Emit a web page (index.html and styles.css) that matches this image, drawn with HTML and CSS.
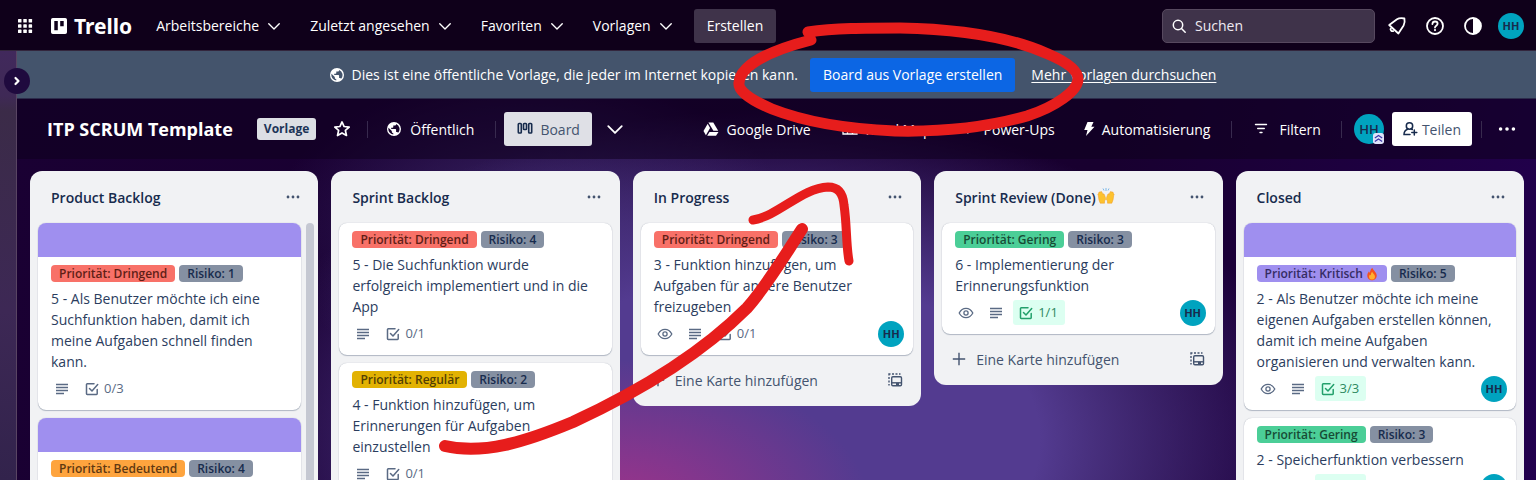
FILE: index.html
```html
<!DOCTYPE html>
<html lang="de">
<head>
<meta charset="utf-8">
<meta name="viewport" content="width=device-width, initial-scale=1">
<title>ITP SCRUM Template | Trello</title>
<link rel="stylesheet" href="styles.css">
</head>
<body>
<svg class="sprite" aria-hidden="true">
  <symbol id="chevron" viewBox="0 0 16 16"><path d="M2 5.500 8 11.500l6-6" fill="none" stroke="currentColor" stroke-width="1.600" stroke-linecap="round" stroke-linejoin="round"/></symbol>
  <symbol id="globe" viewBox="0 0 16 16"><path fill="currentColor" fill-rule="evenodd" d="M8 1a7 7 0 1 0 0 14A7 7 0 0 0 8 1Zm-.7 12.600A5.600 5.600 0 0 1 2.500 6.800L5.800 10v.8c0 .8.7 1.400 1.500 1.400v1.400Zm4.800-1.800c-.2-.5-.7-.9-1.300-.9h-.7V8.800c0-.4-.3-.7-.7-.7H5.200V6.700h1.400c.4 0 .7-.3.7-.7V4.600h1.400c.8 0 1.400-.7 1.400-1.400v-.3a5.600 5.600 0 0 1 2 8.900Z"/></symbol>
  <symbol id="dots" viewBox="0 0 16 16"><g fill="currentColor"><circle cx="2.300" cy="8" r="1.600"/><circle cx="8" cy="8" r="1.600"/><circle cx="13.700" cy="8" r="1.600"/></g></symbol>
  <symbol id="lines" viewBox="0 0 16 16"><path d="M2 3.500h12M2 6.500h12M2 9.500h12M2 12.500h8" stroke="currentColor" stroke-width="1.400" fill="none"/></symbol>
  <symbol id="check" viewBox="0 0 16 16"><path d="M10 2.800H3.200a.7.700 0 0 0-.7.7v9.300c0 .4.3.7.7.7h9.300c.4 0 .7-.3.7-.7V8.500M5.500 7.500 8 10l5.700-6.500" stroke="currentColor" stroke-width="1.500" fill="none" stroke-linecap="round" stroke-linejoin="round"/></symbol>
  <symbol id="eye" viewBox="0 0 16 16"><g fill="none" stroke="currentColor" stroke-width="1.300"><path d="M1.200 8C2.800 4.900 5.200 3.300 8 3.300S13.200 4.900 14.800 8c-1.600 3.100-4 4.700-6.800 4.700S2.800 11.100 1.200 8Z"/><circle cx="8" cy="8" r="2.100"/></g></symbol>
  <symbol id="plus" viewBox="0 0 16 16"><path d="M8 1.800v12.400M1.800 8h12.400" stroke="currentColor" stroke-width="1.400"/></symbol>
  <symbol id="template" viewBox="0 0 16 16"><g fill="none" stroke="currentColor" stroke-width="1.400"><path d="M2 13.500V12M2 10.500V8.500M2 7V5M2 3.500V2h1.500M5 2h2M8.500 2h2M12 2h1.500"/><rect x="4.700" y="4.700" width="9.800" height="9" rx="1.200"/><path d="M4.700 10.800h9.800"/></g><path d="M9 11h3v2H9z" fill="currentColor"/></symbol>
  <symbol id="hands" viewBox="0 0 18 18"><g fill="#fdc22e" stroke="#ee9a25" stroke-width=".5"><path d="M8.400 10.500 7.300 7.400c-.4-1-1.400-.7-1.200.3L4.800 4.900c-.5-.9-1.500-.5-1.300.4L2.700 5c-.8-.1-1.100.4-.9 1.100l-.5.700c-.6.500-.5 1 0 1.700l.6 4.200 1.300 3.500h4.300v-2.300c1.200-.8 1.200-1.900.9-3.400Z"/><path d="m9.600 10.500 1.100-3.100c.4-1 1.400-.7 1.200.3l1.300-2.800c.5-.9 1.500-.5 1.300.4l.8-.3c.8-.1 1.100.4.900 1.100l.5.700c.6.500.5 1 0 1.700l-.6 4.200-1.300 3.500h-4.300v-2.300c-1.200-.8-1.200-1.900-.9-3.400Z"/></g><path d="M9 1v3M6 1.500l1 2M12 1.500l-1 2" stroke="#7db9e8" stroke-width="1" fill="none"/></symbol>
  <symbol id="flame" viewBox="0 0 16 16"><path fill="#f4511e" d="M8.500.8c.3 2.800 4.900 4.700 4.900 9 0 3.200-2.400 5.400-5.400 5.400s-5.400-2.200-5.400-5.400c0-2.200 1.200-3.600 1.900-4.900.3.900.6 1.400 1.200 1.700C5.900 4.200 6.500 2 8.500.8Z"/><path fill="#ffb02e" d="M8.200 5.500c.3 1.700 3.200 3 3.200 5.500 0 2-1.500 3.400-3.400 3.400S4.600 13 4.600 11c0-1.100.5-1.800 1-2.400.3.600.7.800 1.100.8 0-1.300.3-2.800 1.500-3.900Z"/></symbol>
</svg>

<header class="topbar">
  <button class="icon-btn apps" aria-label="Apps"><svg viewBox="0 0 16 16" class="i16"><g fill="currentColor"><rect x="1" y="1" width="3.500" height="3.500" rx=".6"/><rect x="6.300" y="1" width="3.500" height="3.500" rx=".6"/><rect x="11.600" y="1" width="3.500" height="3.500" rx=".6"/><rect x="1" y="6.300" width="3.500" height="3.500" rx=".6"/><rect x="6.300" y="6.300" width="3.500" height="3.500" rx=".6"/><rect x="11.600" y="6.300" width="3.500" height="3.500" rx=".6"/><rect x="1" y="11.600" width="3.500" height="3.500" rx=".6"/><rect x="6.300" y="11.600" width="3.500" height="3.500" rx=".6"/><rect x="11.600" y="11.600" width="3.500" height="3.500" rx=".6"/></g></svg></button>
  <a class="logo" href="#"><svg viewBox="0 0 16 16" class="i16"><path fill="currentColor" fill-rule="evenodd" d="M1.800 0h12.400A1.800 1.800 0 0 1 16 1.800v12.400a1.800 1.800 0 0 1-1.800 1.800H1.800A1.800 1.800 0 0 1 0 14.200V1.800A1.800 1.800 0 0 1 1.800 0Zm1.500 3v9.200h3.500V3H3.300Zm5.900 0v5.300h3.500V3H9.200Z"/></svg>Trello</a>
  <nav class="menu">
    <button>Arbeitsbereiche<svg class="i14"><use href="#chevron"/></svg></button>
    <button>Zuletzt angesehen<svg class="i14"><use href="#chevron"/></svg></button>
    <button>Favoriten<svg class="i14"><use href="#chevron"/></svg></button>
    <button>Vorlagen<svg class="i14"><use href="#chevron"/></svg></button>
    <button class="create">Erstellen</button>
  </nav>
  <div class="tools">
    <label class="search"><svg viewBox="0 0 16 16" class="i16"><g fill="none" stroke="currentColor" stroke-width="1.500" stroke-linecap="round"><circle cx="7" cy="7" r="4.700"/><path d="m10.500 10.500 3.700 3.700"/></g></svg><input type="text" placeholder="Suchen" aria-label="Suchen"></label>
    <button class="icon-btn" aria-label="Benachrichtigungen"><svg viewBox="0 0 20 20" class="i20"><path d="M2.200 9 10 3.300C12 2 14.800 2 17.400 2.500c.5 2.500.4 5-.8 7L11.400 17.500ZM3.800 12.200c-.9 1.700.7 3.600 3 2.700" fill="none" stroke="currentColor" stroke-width="1.800" stroke-linejoin="round"/></svg></button>
    <button class="icon-btn" aria-label="Hilfe"><svg viewBox="0 0 20 20" class="i20"><g fill="none" stroke="currentColor" stroke-width="1.800" stroke-linecap="round"><circle cx="10" cy="10" r="8"/><path d="M7.400 8c.1-1.600 1.200-2.500 2.600-2.500s2.600.9 2.600 2.200c0 1.900-2.600 2-2.600 3.800"/></g><circle cx="10" cy="14.100" r="1.100" fill="currentColor"/></svg></button>
    <button class="icon-btn" aria-label="Design"><svg viewBox="0 0 20 20" class="i20"><circle cx="10" cy="10" r="8" fill="none" stroke="currentColor" stroke-width="1.800"/><path d="M10 2a8 8 0 0 1 0 16Z" fill="currentColor"/></svg></button>
    <button class="avatar account" aria-label="Konto">HH</button>
  </div>
</header>

<div class="workspace">
  <aside class="sidebar"><button class="expand" aria-label="Seitenleiste einblenden"><svg viewBox="0 0 16 16" class="i16"><path d="m6.500 5 3 3-3 3" fill="none" stroke="currentColor" stroke-width="2.200" stroke-linecap="round" stroke-linejoin="round"/></svg></button></aside>
  <main class="board">
    <div class="banner">
      <p><svg class="i16"><use href="#globe"/></svg>Dies ist eine öffentliche Vorlage, die jeder im Internet kopieren kann.</p>
      <button class="primary">Board aus Vorlage erstellen</button>
      <a href="#">Mehr Vorlagen durchsuchen</a>
    </div>
    <div class="board-header">
      <h1>ITP SCRUM Template</h1>
      <span class="tag">Vorlage</span>
      <button class="star" aria-label="Markieren"><svg viewBox="0 0 16 16" class="i18"><path d="m8 1.700 1.900 4.100 4.500.5-3.400 3 1 4.500L8 11.500l-4 2.300 1-4.500-3.400-3 4.500-.5Z" fill="none" stroke="currentColor" stroke-width="1.500" stroke-linejoin="round"/></svg></button>
      <i class="divider"></i>
      <button class="bar-btn visibility"><svg class="i16"><use href="#globe"/></svg>Öffentlich</button>
      <i class="divider"></i>
      <button class="view"><svg viewBox="0 0 16 16" class="i16"><g fill="none" stroke="#172b4d" stroke-width="1.600"><rect x="1.300" y="2.500" width="3" height="9.500" rx=".8"/><rect x="6.500" y="2.500" width="3" height="6" rx=".8"/><rect x="11.700" y="2.500" width="3" height="9.500" rx=".8"/></g></svg>Board</button>
      <button class="more-views" aria-label="Ansichten"><svg class="i18"><use href="#chevron"/></svg></button>
      <div class="actions">
        <button class="bar-btn drive"><svg viewBox="0 0 16 16" class="i16"><g fill="currentColor"><path d="M5.400 1.500h4.900l4.900 8.300h-4.800Z"/><path d="M4.700 2.700 7.100 6.900 2.900 14.200.5 10Z"/><path d="M6.500 10.900h9L13 14.800H4.200Z"/></g></svg>Google Drive</button>
        <button class="bar-btn"><svg viewBox="0 0 16 16" class="i16"><path d="M1 3h14M1 3v10h14V3M5.500 3v10M10.500 3v10M1 8h14" fill="none" stroke="currentColor" stroke-width="1.300"/></svg>Road Map</button>
        <button class="bar-btn"><svg viewBox="0 0 16 16" class="i16"><path d="M6 9.500C5.500 5.500 7.500 2 12 1.800c.5 4.500-2 7.500-6 7.700ZM5 6 3 8.500M9.500 9l-2 3.500" fill="none" stroke="currentColor" stroke-width="1.500"/></svg>Power-Ups</button>
        <button class="bar-btn bolt"><svg viewBox="0 0 12 16" class="i-bolt"><path d="M4.500 1h6L8.300 5.800H11.500L3 15l1.500-6H1.200Z" fill="currentColor"/></svg>Automatisierung</button>
        <i class="divider"></i>
        <button class="bar-btn filter"><svg viewBox="0 0 16 16" class="i16"><path d="M2.500 3.500h11M4.700 7.500h6.600M7 11.500h2" fill="none" stroke="currentColor" stroke-width="1.400" stroke-linecap="round"/></svg>Filtern</button>
        <i class="divider"></i>
        <button class="avatar large" aria-label="Mitglied">HH<svg viewBox="0 0 12 12" class="admin"><rect width="12" height="12" rx="3" fill="#dfe3fa"/><path d="m2 5.500 4-2.700 4 2.700M2 9.200l4-2.700 4 2.700" fill="none" stroke="#3d36a8" stroke-width="1.300"/></svg></button>
        <button class="share"><svg viewBox="0 0 16 16" class="i16"><g fill="none" stroke="#172b4d" stroke-width="1.500" stroke-linecap="round"><circle cx="7.500" cy="5" r="3.200"/><path d="M8 13.500H2c0-3 1.500-4.500 3.500-5.300M12.300 9v5M9.800 11.500h5M9.500 8l.8.500"/></g></svg>Teilen</button>
        <i class="divider"></i>
        <button class="icon-btn" aria-label="Menü"><svg class="i18"><use href="#dots"/></svg></button>
      </div>
    </div>

    <div class="lists">
      <section class="list tall scrolls">
        <header><h2>Product Backlog</h2><button aria-label="Aktionen"><svg class="i14"><use href="#dots"/></svg></button></header>
        <div class="cards">
          <article class="card"><div class="cover"></div><div class="body">
            <div class="labels"><span class="red">Priorität: Dringend</span><span class="grey">Risiko: 1</span></div>
            <p>5 - Als Benutzer möchte ich eine Suchfunktion haben, damit ich meine Aufgaben schnell finden kann.</p>
            <div class="badges"><span><svg class="i16"><use href="#lines"/></svg></span><span><svg class="i16"><use href="#check"/></svg>0/3</span></div>
          </div></article>
          <article class="card"><div class="cover"></div><div class="body">
            <div class="labels"><span class="orange">Priorität: Bedeutend</span><span class="grey">Risiko: 4</span></div>
          </div></article>
        </div>
        <div class="scrollbar"></div>
      </section>

      <section class="list tall">
        <header><h2>Sprint Backlog</h2><button aria-label="Aktionen"><svg class="i14"><use href="#dots"/></svg></button></header>
        <div class="cards">
          <article class="card"><div class="body">
            <div class="labels"><span class="red">Priorität: Dringend</span><span class="grey">Risiko: 4</span></div>
            <p>5 - Die Suchfunktion wurde erfolgreich implementiert und in die App</p>
            <div class="badges"><span><svg class="i16"><use href="#lines"/></svg></span><span><svg class="i16"><use href="#check"/></svg>0/1</span></div>
          </div></article>
          <article class="card"><div class="body">
            <div class="labels"><span class="yellow">Priorität: Regulär</span><span class="grey">Risiko: 2</span></div>
            <p>4 - Funktion hinzufügen, um Erinnerungen für Aufgaben einzustellen</p>
            <div class="badges"><span><svg class="i16"><use href="#lines"/></svg></span><span><svg class="i16"><use href="#check"/></svg>0/1</span></div>
          </div></article>
        </div>
      </section>

      <section class="list">
        <header><h2>In Progress</h2><button aria-label="Aktionen"><svg class="i14"><use href="#dots"/></svg></button></header>
        <div class="cards">
          <article class="card"><div class="body">
            <div class="labels"><span class="red">Priorität: Dringend</span><span class="grey">Risiko: 3</span></div>
            <p>3 - Funktion hinzufügen, um Aufgaben für andere Benutzer freizugeben</p>
            <div class="badges"><span><svg class="i16"><use href="#eye"/></svg></span><span><svg class="i16"><use href="#lines"/></svg></span><span><svg class="i16"><use href="#check"/></svg>0/1</span><b class="avatar">HH</b></div>
          </div></article>
        </div>
        <footer><button class="add"><svg class="i16"><use href="#plus"/></svg>Eine Karte hinzufügen</button><button aria-label="Aus Vorlage erstellen"><svg class="i16"><use href="#template"/></svg></button></footer>
      </section>

      <section class="list">
        <header><h2>Sprint Review (Done)<svg class="i18"><use href="#hands"/></svg></h2><button aria-label="Aktionen"><svg class="i14"><use href="#dots"/></svg></button></header>
        <div class="cards">
          <article class="card"><div class="body">
            <div class="labels"><span class="green">Priorität: Gering</span><span class="grey">Risiko: 3</span></div>
            <p>6 - Implementierung der Erinnerungsfunktion</p>
            <div class="badges"><span><svg class="i16"><use href="#eye"/></svg></span><span><svg class="i16"><use href="#lines"/></svg></span><span class="done"><svg class="i16"><use href="#check"/></svg>1/1</span><b class="avatar">HH</b></div>
          </div></article>
        </div>
        <footer><button class="add"><svg class="i16"><use href="#plus"/></svg>Eine Karte hinzufügen</button><button aria-label="Aus Vorlage erstellen"><svg class="i16"><use href="#template"/></svg></button></footer>
      </section>

      <section class="list tall">
        <header><h2>Closed</h2><button aria-label="Aktionen"><svg class="i14"><use href="#dots"/></svg></button></header>
        <div class="cards">
          <article class="card"><div class="cover"></div><div class="body">
            <div class="labels"><span class="purple">Priorität: Kritisch<svg class="i14"><use href="#flame"/></svg></span><span class="grey">Risiko: 5</span></div>
            <p>2 - Als Benutzer möchte ich meine eigenen Aufgaben erstellen können, damit ich meine Aufgaben organisieren und verwalten kann.</p>
            <div class="badges"><span><svg class="i16"><use href="#eye"/></svg></span><span><svg class="i16"><use href="#lines"/></svg></span><span class="done"><svg class="i16"><use href="#check"/></svg>3/3</span><b class="avatar">HH</b></div>
          </div></article>
          <article class="card"><div class="body">
            <div class="labels"><span class="green">Priorität: Gering</span><span class="grey">Risiko: 3</span></div>
            <p>2 - Speicherfunktion verbessern</p>
            <div class="badges"><span><svg class="i16"><use href="#eye"/></svg></span><span><svg class="i16"><use href="#lines"/></svg></span><span class="done"><svg class="i16"><use href="#check"/></svg>1/1</span><b class="avatar">HH</b></div>
          </div></article>
        </div>
      </section>
    </div>
  </main>
</div>

<svg class="marker" viewBox="0 0 1536 480" width="1536" height="480" aria-hidden="true">
  <g fill="none" stroke="#e71d1c" stroke-width="11" stroke-linecap="round" stroke-linejoin="round">
    <path d="M808 32C835 28 865 28 900 28C960 29 1010 37 1048 54C1069 63 1078 71 1078 79C1078 91 1055 107 1027 116C985 128 940 132 895 131C850 129 805 122 772 109C748 99 738 90 739 83C740 66 768 51 811 40"/>
    <path d="M445 446C483 455 525 442 573 422C640 391 700 355 747 308C768 284 783 258 802 229" stroke-width="12"/>
    <path d="M753 220C778 216 802 188 828 187C838 187 843 193 844 205C847 225 846 245 849 261" stroke-width="9"/>
  </g>
</svg>
</body>
</html>
```
FILE: styles.css
```css
* { box-sizing: border-box; }
body {
  margin: 0;
  height: 100vh;
  overflow: hidden;
  display: flex;
  flex-direction: column;
  position: relative;
  font: 14px/21px "Open Sans", "Noto Sans", sans-serif;
  color: #fff;
  background:
    radial-gradient(ellipse 260px 150px at 610px 510px, #a03389 0%, rgba(150, 52, 140, .7) 40%, transparent 100%),
    radial-gradient(ellipse 540px 330px at 770px 440px, #533b90 0%, #533b90 50%, transparent 100%),
    radial-gradient(ellipse 260px 160px at 530px 230px, #3b2768 0%, transparent 100%),
    linear-gradient(100deg, #1a0033 0%, #18002f 70%, #22004e 100%);
}
button, input { font: inherit; color: inherit; }
button {
  display: flex;
  align-items: center;
  border: 0;
  padding: 0;
  background: none;
  white-space: nowrap;
}
h1, h2, p { margin: 0; }
svg { flex: none; }
.sprite { display: none; }
.i14 { width: 14px; height: 14px; }
.i16 { width: 16px; height: 16px; }
.i18 { width: 18px; height: 18px; }
.i20 { width: 20px; height: 20px; }
.i-bolt { width: 12px; height: 16px; }

.topbar {
  display: flex;
  flex: none;
  align-items: center;
  height: 51px;
  padding: 1px 12px 0 17px;
  background: #0f001a;
  border-bottom: 1px solid #33263d;
}
.logo {
  display: flex;
  align-items: center;
  gap: 7px;
  margin-left: 18px;
  color: inherit;
  font: 700 21px/26px "Noto Sans", sans-serif;
  text-decoration: none;
}
.menu { display: flex; gap: 4px; margin-left: 12px; font-weight: 500; }
.menu button { gap: 8px; height: 34px; padding: 0 13px 0 12px; }
.menu .create { margin-left: 4px; padding: 0 13px; border-radius: 3px; background: #3f334a; }
.tools { display: flex; align-items: center; gap: 18px; margin-left: auto; }
.search {
  display: flex;
  align-items: center;
  gap: 8px;
  width: 213px;
  height: 34px;
  margin-right: -6px;
  padding: 0 8px;
  border: 1px solid #57495f;
  border-radius: 5px;
  background: #3f334a;
}
.search input { width: 100%; border: 0; outline: 0; padding: 0; background: none; }
.search input::placeholder { color: #eeeaf1; opacity: 1; }
.avatar {
  display: flex;
  align-items: center;
  justify-content: center;
  width: 26px;
  height: 26px;
  border-radius: 50%;
  background: #00a3bf;
  color: #172b4d;
  font: 700 11px/16px "Open Sans", sans-serif;
}
.account { margin-left: -3px; }
.avatar.large { position: relative; width: 30px; height: 30px; font-size: 13px; font-weight: 600; }
.admin { position: absolute; right: 0; bottom: 0; width: 11px; height: 11px; }

.workspace { display: flex; flex: 1; min-height: 0; }
.sidebar {
  position: relative;
  flex: none;
  width: 17px;
  border-right: 1px solid #594563;
  background: linear-gradient(#41295c 0, #3f2956 45px, #3b2b48 60px, #3d2855 260px, #32234c 100%);
}
.expand {
  position: absolute;
  z-index: 1;
  top: 17px;
  left: 4px;
  justify-content: center;
  width: 26px;
  height: 26px;
  border-radius: 50%;
  background: #1f0a3e;
}
.board { display: flex; flex: 1; flex-direction: column; min-width: 0; }
.banner {
  display: flex;
  flex: none;
  align-items: center;
  justify-content: center;
  height: 48px;
  padding-right: 8px;
  background: #44546c;
  border-bottom: 1px solid #2c2c4b;
  font-weight: 500;
}
.banner p { display: flex; align-items: center; gap: 7px; }
.banner a { margin-left: 16px; color: inherit; text-underline-offset: 2px; }
.primary { height: 34px; margin-left: 12px; padding: 0 13px; border-radius: 3px; background: #0c66e4; }

.board-header {
  display: flex;
  flex: none;
  align-items: center;
  height: 60px;
  padding: 0 20px 0 30px;
  background: rgba(15, 0, 30, .55);
  font-weight: 500;
}
h1 { font-size: 18px; line-height: 26px; font-weight: 700; white-space: nowrap; }
.tag {
  margin-left: 24px;
  padding: 1px 7px;
  border-radius: 3px;
  background: #dcdfe4;
  color: #1d3557;
  font-size: 12px;
  line-height: 20px;
  font-weight: 700;
}
.star { margin-left: 17px; }
.divider { width: 1px; height: 17px; background: #382a4e; }
.star + .divider { margin-left: 16px; }
.bar-btn { gap: 8px; }
.visibility { gap: 8px; margin: 0 21px 0 18px; }
.view {
  gap: 7px;
  height: 34px;
  margin-left: 8px;
  padding: 0 12px 0 13px;
  border-radius: 3px;
  background: #dfe0e6;
  color: #44546f;
  font-weight: 400;
}
.more-views { margin-left: 14px; }
.actions { display: flex; align-items: center; margin-left: auto; }
.actions .bar-btn { margin-right: 28px; }
.actions .drive { margin-right: 31px; }
.actions .bolt { gap: 7px; margin-right: 21px; }
.actions .filter { gap: 10px; margin: 0 20px 0 21px; }
.actions .large { margin-left: 12px; }
.share {
  gap: 4px;
  height: 34px;
  margin: 0 9px 0 8px;
  padding: 0 11px 0 10px;
  border-radius: 3px;
  background: #fff;
  color: #44546f;
  font-weight: 400;
}
.share + .divider { margin-right: 16px; }

.lists {
  display: grid;
  flex: 1;
  grid-template-columns: repeat(5, minmax(0, 1fr));
  align-items: start;
  gap: 13px;
  min-height: 0;
  padding: 12px 12px 0 13px;
  color: #172b4d;
}
.list {
  display: flex;
  flex-direction: column;
  padding: 0 8px;
  border-radius: 12px;
  background: #f1f2f4;
}
.tall { height: 100%; overflow: hidden; border-radius: 12px 12px 0 0; }
.list > header {
  display: flex;
  flex: none;
  align-items: center;
  justify-content: space-between;
  height: 52px;
  padding: 0 11px 0 13px;
  color: #44546f;
}
h2 { display: flex; gap: 1px; color: #172b4d; font-size: 14px; line-height: 21px; font-weight: 600; }
.cards { display: flex; flex-direction: column; gap: 8px; }
.scrolls { display: grid; grid-template: 52px 1fr / 1fr 8px; column-gap: 5px; padding-right: 4px; }
.scrolls > header { grid-column: 1 / 3; padding-right: 14px; }
.scrollbar { border-radius: 4px 4px 0 0; background: #c5c8d2; }
.card {
  flex: none;
  overflow: hidden;
  border-radius: 8px;
  background: #fff;
  box-shadow: 0 1px 1px #091e4240, 0 0 1px #091e424f;
}
.card p { padding-right: 12px; color: #2b3d5e; }
.scrolls .card p { padding-right: 4px; }
.cover { height: 34px; background: #9f8fef; }
.body { padding: 8px 9px 9px 13px; }
.labels { display: flex; gap: 4px; margin-bottom: 6px; }
.labels span {
  display: flex;
  align-items: center;
  gap: 2px;
  height: 17px;
  padding: 0 8px;
  border-radius: 4px;
  font-size: 12px;
  line-height: 17px;
  font-weight: 600;
  white-space: nowrap;
}
.red { background: #f87168; color: #601e16; }
.orange { background: #fea43e; color: #5f3811; }
.yellow { background: #e2b203; color: #533f04; }
.green { background: #4bce97; color: #174b35; }
.purple { background: #9f8fef; color: #352c63; }
.grey { background: #8590a2; color: #172b4d; }
.badges { display: flex; gap: 4px; margin: 4px 0 0 -2px; color: #5a6a84; font-size: 13px; }
.badges span { display: flex; align-items: center; gap: 4px; height: 25px; padding: 0 7px 0 5px; border-radius: 3px; }
.badges span:not(:last-of-type) { padding-right: 5px; }
.badges .done { background: #dcfff1; color: #2e8a62; }
.badges .done svg { color: #22a06b; }
.badges .avatar { height: 26px; margin: 0 0 -1px auto; }
.list > footer {
  display: flex;
  align-items: center;
  justify-content: space-between;
  height: 34px;
  margin: 8px 0 9px;
  padding: 0 10px 0 9px;
  color: #44546f;
}
.add { gap: 9px; }
.marker { position: absolute; top: 0; left: 0; pointer-events: none; }
```
